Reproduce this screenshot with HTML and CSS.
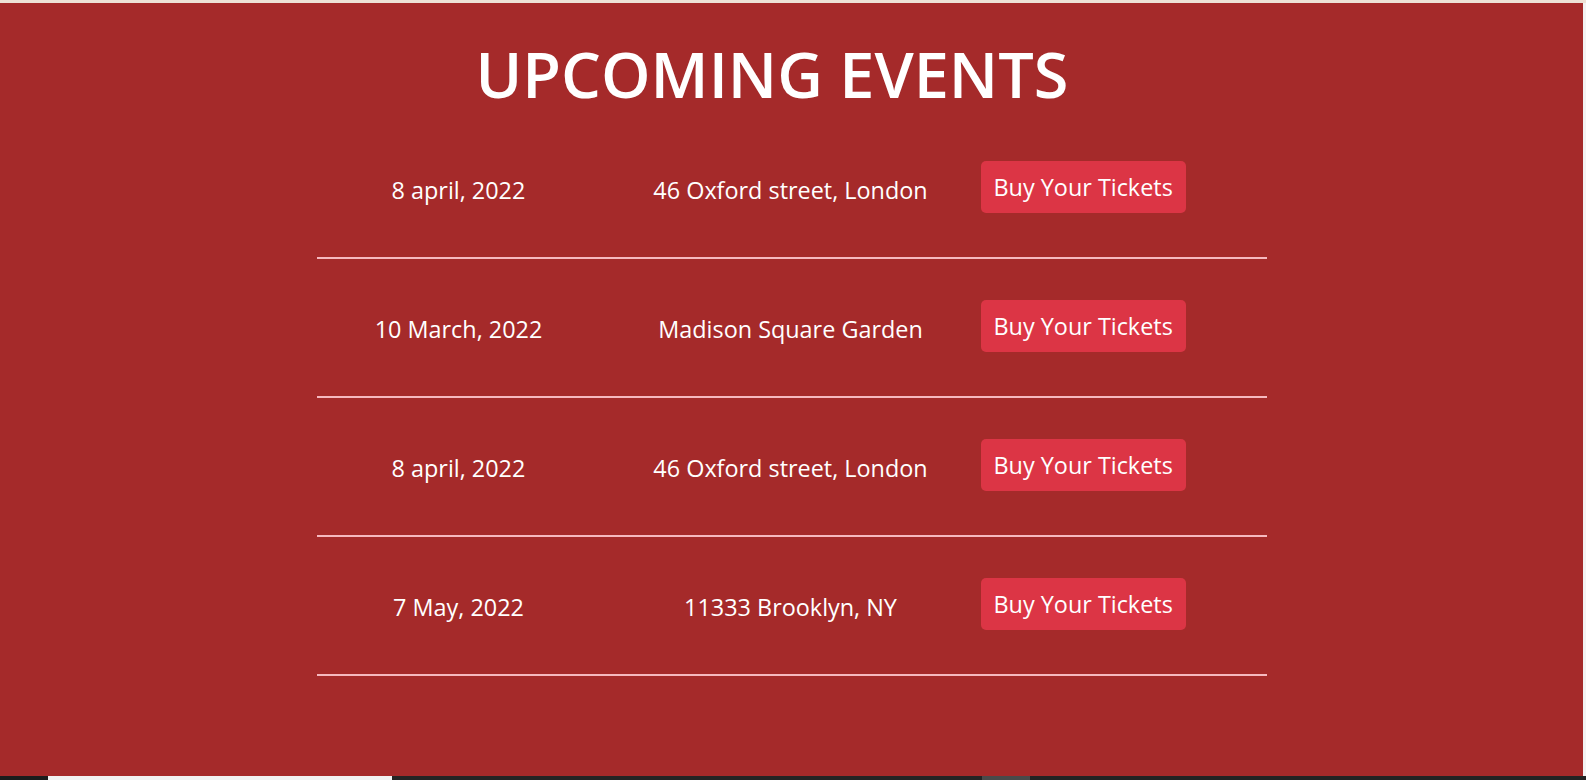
FILE: index.html
```html
<!DOCTYPE html>
<html lang="en">
<head>
<meta charset="utf-8">
<title>Upcoming Events</title>
<link rel="stylesheet" href="styles.css">
</head>
<body>
<div class="frame">
  <div class="top-edge"></div>
  <div class="main-row">
    <section class="events">
      <h1 class="events-title">UPCOMING EVENTS</h1>
      <div class="event-list">
        <div class="event-row">
          <div class="event-date">8 april, 2022</div>
          <div class="event-place">46 Oxford street, London</div>
          <div class="event-action"><button class="ticket-btn">Buy Your Tickets</button></div>
        </div>
        <div class="event-row">
          <div class="event-date">10 March, 2022</div>
          <div class="event-place">Madison Square Garden</div>
          <div class="event-action"><button class="ticket-btn">Buy Your Tickets</button></div>
        </div>
        <div class="event-row">
          <div class="event-date">8 april, 2022</div>
          <div class="event-place">46 Oxford street, London</div>
          <div class="event-action"><button class="ticket-btn">Buy Your Tickets</button></div>
        </div>
        <div class="event-row">
          <div class="event-date">7 May, 2022</div>
          <div class="event-place">11333 Brooklyn, NY</div>
          <div class="event-action"><button class="ticket-btn">Buy Your Tickets</button></div>
        </div>
      </div>
    </section>
    <div class="side-edge"></div>
  </div>
  <div class="bottom-strip">
    <div class="strip-dark strip-a"></div>
    <div class="strip-light"></div>
    <div class="strip-dark strip-b"></div>
    <div class="strip-gray"></div>
    <div class="strip-dark strip-c"></div>
  </div>
</div>
</body>
</html>
```

FILE: styles.css
```css
* { box-sizing: border-box; }
html, body { margin: 0; padding: 0; }
body {
  width: 1586px;
  height: 780px;
  overflow: hidden;
  font-family: "Open Sans", "Noto Sans", sans-serif;
  background: #f1f1f1;
}
.frame {
  display: flex;
  flex-direction: column;
  height: 780px;
}
.top-edge {
  height: 3px;
  background: #eee2d6;
}
.main-row {
  display: flex;
  height: 773px;
}
.events {
  width: 1583px;
  background: #a52a2a;
  color: #fff;
  display: flex;
  flex-direction: column;
  align-items: center;
}
.side-edge {
  width: 3px;
  background: #f3f3f3;
}
.events-title {
  margin: 26px 39px 0 0;
  font-size: 63px;
  font-weight: 600;
  line-height: 90px;
  letter-spacing: 0;
}
.event-list {
  width: 950px;
  margin-top: 1px;
  display: flex;
  flex-direction: column;
}
.event-row {
  display: grid;
  grid-template-columns: 284px 380px 1fr;
  align-items: center;
  padding: 41px 0 44px;
  border-bottom: 2px solid #f6b9bf;
}
.event-date, .event-place {
  text-align: center;
  font-size: 23.4px;
  line-height: 32px;
  padding-top: 6px;
}
.event-action {
  display: flex;
}
.ticket-btn {
  height: 52px;
  padding: 0 13px;
  border: none;
  border-radius: 5px;
  background: #dc3545;
  color: #fff;
  font-family: inherit;
  font-size: 23.4px;
  line-height: 32px;
}
.bottom-strip {
  height: 4px;
  display: flex;
}
.strip-dark { background: #1c1c1c; }
.strip-a { width: 48px; }
.strip-light { width: 344px; background: #f2f2f2; }
.strip-b { width: 590px; background: #242424; }
.strip-gray { width: 48px; background: #4a4a4a; }
.strip-c { flex: 1; background: #232323; }
```
